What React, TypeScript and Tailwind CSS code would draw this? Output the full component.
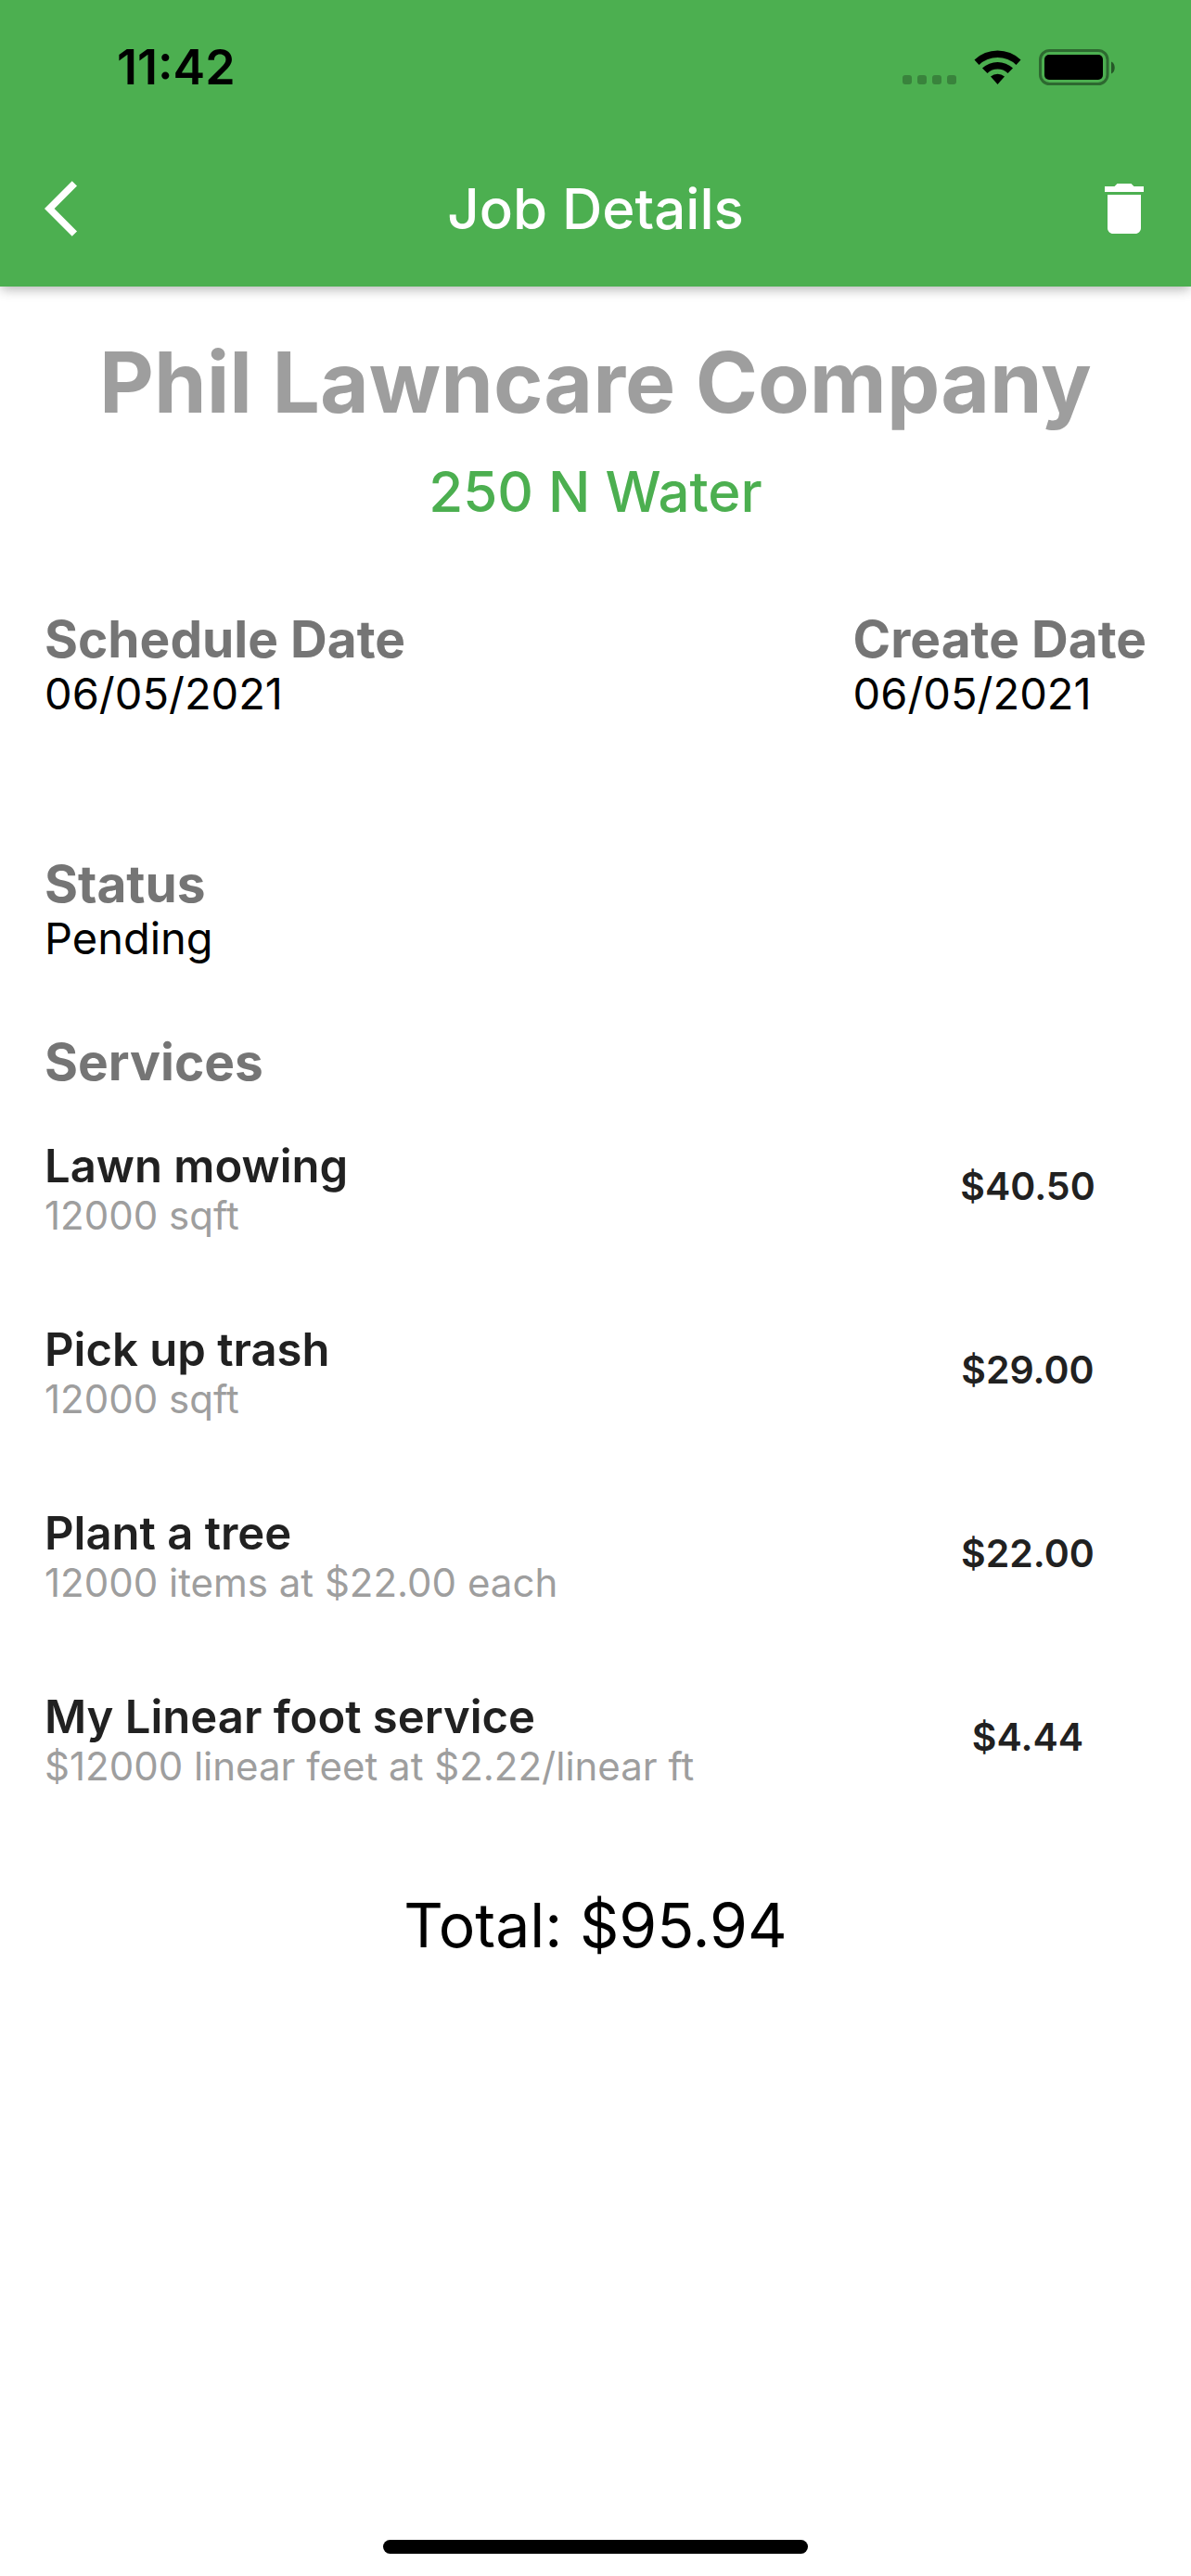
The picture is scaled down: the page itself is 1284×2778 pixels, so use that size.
import React from 'react';

type Service = {
  name: string;
  detail: string;
  price: string;
};

const services: Service[] = [
  { name: 'Lawn mowing', detail: '12000 sqft', price: '$40.50' },
  { name: 'Pick up trash', detail: '12000 sqft', price: '$29.00' },
  { name: 'Plant a tree', detail: '12000 items at $22.00 each', price: '$22.00' },
  { name: 'My Linear foot service', detail: '$12000 linear feet at $2.22/linear ft', price: '$4.44' },
];

const StatusBar: React.FC = () => (
  <div className="flex h-[141px] items-center justify-between pt-1 pr-[82px] pl-[126px] text-black">
    <span className="text-[52px] leading-[60px] font-semibold">11:42</span>
    {/* Signal dots, wifi, battery */}
    <svg className="h-10 w-[230px]" viewBox="972 53 230 40" aria-hidden="true">
      <g fillOpacity="0.25">
        <rect x="973" y="81" width="10" height="10" rx="3" />
        <rect x="989" y="81" width="10" height="10" rx="3" />
        <rect x="1005" y="81" width="10" height="10" rx="3" />
        <rect x="1021" y="81" width="10" height="10" rx="3" />
      </g>
      <path d="M1050.500 64.500a36 36 0 0 1 50 0l-5 5.500a29 29 0 0 0-40 0z" />
      <path d="M1059 73.500a24 24 0 0 1 33 0l-5.500 5.500a16 16 0 0 0-22 0z" />
      <path d="M1068 82.500a12 12 0 0 1 15 0l-7.500 8.500z" />
      <rect x="1121.500" y="54.500" width="72.500" height="36" rx="10" fill="none" stroke="#000" strokeOpacity="0.4" strokeWidth="3" />
      <rect x="1126" y="59" width="63" height="27" rx="5" />
      <path d="M1198 66.500c5 2 5 11 0 13z" fillOpacity="0.5" />
    </svg>
  </div>
);

const AppBar: React.FC = () => (
  <div className="flex h-[168px] items-center justify-between px-9 text-white">
    <button type="button" aria-label="Back" className="flex h-[72px] w-[72px] items-center justify-center">
      <svg className="h-[72px] w-[72px]" viewBox="-4 0 24 24" fill="currentColor">
        <path d="M11.67 3.870L9.900 2.100 0 12l9.900 9.900 1.770-1.770L3.540 12z" />
      </svg>
    </button>
    <h1 className="text-[60px] leading-[72px] font-medium">Job Details</h1>
    <button type="button" aria-label="Delete job" className="flex h-[72px] w-[72px] items-center justify-center">
      <svg className="h-[72px] w-[72px]" viewBox="0 0 24 24" fill="currentColor">
        <path d="M6 19c0 1.100.9 2 2 2h8c1.100 0 2-.9 2-2V7H6v12zM19 4h-3.500l-1-1h-5l-1 1H5v2h14V4z" />
      </svg>
    </button>
  </div>
);

const Field: React.FC<{ label: string; value: string }> = ({ label, value }) => (
  <div>
    <dt className="text-[55px] leading-[62px] font-bold text-[#757575]">{label}</dt>
    <dd className="text-[47px] leading-[56px] text-black">{value}</dd>
  </div>
);

const App: React.FC = () => {
  return (
    <div className="flex min-h-screen flex-col bg-white font-['Inter',sans-serif]">
      <header className="bg-[#4caf50] shadow-[0_4px_12px_-1px_rgba(0,0,0,0.3)]">
        <StatusBar />
        <AppBar />
      </header>

      <main className="flex-1 px-12 pt-[49px]">
        {/* Customer */}
        <div className="text-center">
          <h2 className="text-[91px] leading-[108px] font-bold text-[#9e9e9e]">Phil Lawncare Company</h2>
          <p className="mt-7 text-[60px] leading-[72px] font-medium text-[#4caf50]">250 N Water</p>
        </div>

        <dl className="mt-[92px]">
          <div className="flex justify-between">
            <Field label="Schedule Date" value="06/05/2021" />
            <Field label="Create Date" value="06/05/2021" />
          </div>
          <div className="mt-[146px]">
            <Field label="Status" value="Pending" />
          </div>
        </dl>

        {/* Services */}
        <h3 className="mt-[74px] text-[55px] leading-[62px] font-bold text-[#757575]">Services</h3>
        <ul className="mt-1">
          {services.map((service) => (
            <li key={service.name} className="flex items-center justify-between py-[42px]">
              <div className="pt-2">
                <p className="text-[49px] leading-[56px] font-semibold text-[#212121]">{service.name}</p>
                <p className="text-[42px] leading-[50px] text-[#9e9e9e]">{service.detail}</p>
              </div>
              <p className="w-64 text-center text-[41px] leading-[50px] font-semibold text-[#212121]">{service.price}</p>
            </li>
          ))}
        </ul>

        <p className="mt-[66px] text-center text-[66px] leading-[76px] text-black">Total: $95.94</p>
      </main>

      {/* Home indicator */}
      <div className="flex justify-center pb-6">
        <div className="h-[15px] w-[458px] rounded-full bg-black" />
      </div>
    </div>
  );
};

export default App;
